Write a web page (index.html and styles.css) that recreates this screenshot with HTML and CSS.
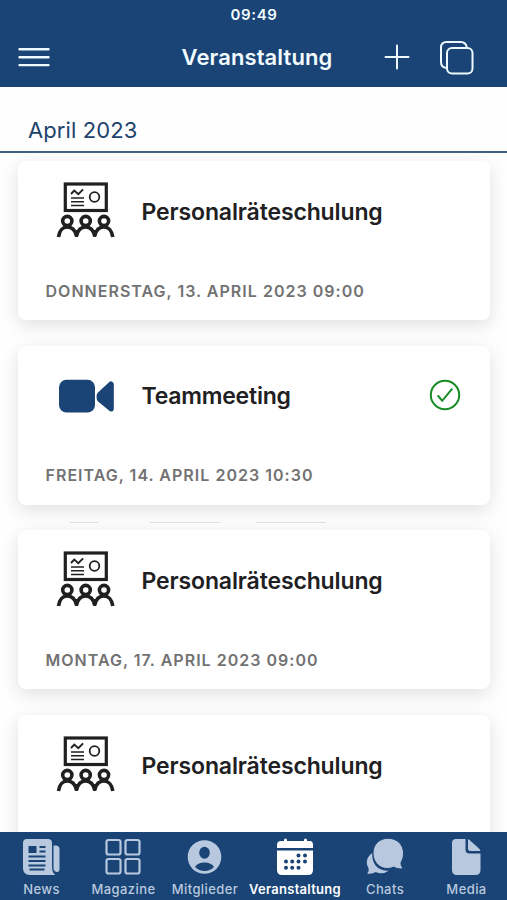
FILE: index.html
```html
<!DOCTYPE html>
<html lang="de">
<head>
<meta charset="utf-8">
<title>Veranstaltung</title>
<link rel="stylesheet" href="styles.css">
</head>
<body>
<svg class="defs" width="0" height="0">
  <symbol id="training" viewBox="0 0 60 58">
    <g fill="none" stroke="#202020">
      <rect x="9.300" y="3" width="41" height="26.500" stroke-width="3.200"/>
      <path d="M15 13l3.300-3.400 4 3.500 4.800-4.800" stroke-width="1.900"/>
      <path d="M15 17h13M15 20.700h13M15 24.400h13" stroke-width="1.500"/>
      <circle cx="38.500" cy="16" r="4.800" stroke-width="1.800"/>
      <g stroke-width="3.600">
        <circle cx="11.300" cy="40" r="4.600"/><circle cx="29.700" cy="40" r="4.600"/><circle cx="48" cy="40" r="4.600"/>
        <path d="M2.500 56c.8-6 4.200-10 8.800-10s8 3.500 9.200 9c1.200-5.500 4.500-9 9.100-9s7.900 3.500 9.100 9c1.200-5.500 4.500-9 9.100-9s8.200 4 9 10"/>
      </g>
      <path d="M20.500 49v7M38.700 49v7" stroke-width="2.800"/>
    </g>
  </symbol>
</svg>
<div class="app">
  <header class="header">
    <div class="status">09:49</div>
    <div class="bar">
      <svg class="menu" width="34" height="24" viewBox="0 0 34 24"><path d="M2.500 4.300h29M2.500 12.200h29M2.500 20.100h29"/></svg>
      <h1>Veranstaltung</h1>
      <div class="actions">
        <svg width="26" height="26" viewBox="0 0 26 26"><path d="M13 1.500v23M1.500 13h23"/></svg>
        <svg width="36" height="36" viewBox="0 0 36 36"><path d="M8.500 29Q3 28.500 3 23V8.500Q3 3 8.500 3H22.500Q28 3 28.800 8.500"/><rect x="9" y="9" width="25.500" height="25.500" rx="5"/></svg>
      </div>
    </div>
  </header>
  <h2 class="month">April 2023</h2>
  <main class="list">
    <article class="card">
      <div class="row"><svg class="icon" viewBox="0 0 60 58"><use href="#training"/></svg><h3>Personalräteschulung</h3></div>
      <p class="date">Donnerstag, 13. April 2023 09:00</p>
    </article>
    <article class="card">
      <div class="row"><svg class="icon" viewBox="0 0 60 58"><rect x="3" y="13.800" width="36" height="32.700" rx="7.500" fill="#194475"/><path d="M42 26.500L53 16.200Q55 14.500 56.500 16Q57.800 16.800 57.800 18V43Q57.600 45.300 56 45.500Q54 45.600 53 44.500L42 35.500Q40.600 34 40.600 32V29.500Q40.600 28 42 26.500Z" fill="#194475"/></svg><h3 class="team">Teammeeting</h3><svg class="check" width="32" height="32" viewBox="0 0 32 32"><circle cx="16" cy="16" r="14.200"/><path d="M9.200 17l4 4.800 9.600-11.600"/></svg></div>
      <p class="date">Freitag, 14. April 2023 10:30</p>
    </article>
    <div class="marks"><i></i><i></i><i></i></div>
    <article class="card">
      <div class="row"><svg class="icon" viewBox="0 0 60 58"><use href="#training"/></svg><h3>Personalräteschulung</h3></div>
      <p class="date d3">Montag, 17. April 2023 09:00</p>
    </article>
    <article class="card">
      <div class="row"><svg class="icon" viewBox="0 0 60 58"><use href="#training"/></svg><h3>Personalräteschulung</h3></div>
    </article>
  </main>
  <nav class="tabs">
    <a class="tab"><svg viewBox="0 0 40 40"><path fill="currentColor" d="M6 2h21q4 0 4 4v25q0 4 3 7H9q-7 0-7-7V6q0-4 4-4Z"/><path fill="currentColor" d="M32.500 8.500h2q4 0 4 4V32q0 3-2.500 3t-3.500-3Z"/><g fill="none" stroke="#194475" stroke-width="2"><path d="M18.500 10h6M18.500 14.500h6M7.500 19.500h17M7.500 24h17M7.500 28.500h17M8.500 32.500h15"/></g><path d="M7.500 9h8v7h-8z" fill="#194475"/></svg><span>News</span></a>
    <a class="tab"><svg viewBox="0 0 40 40"><g fill="none" stroke="currentColor" stroke-width="2.200"><rect x="3.500" y="3" width="14" height="14.500" rx="2"/><rect x="22.500" y="3" width="14" height="14.500" rx="2"/><rect x="3.500" y="22" width="14" height="14.500" rx="2"/><rect x="22.500" y="22" width="14" height="14.500" rx="2"/></g></svg><span>Magazine</span></a>
    <a class="tab"><svg viewBox="0 0 40 40"><circle cx="19.500" cy="20" r="16.800" fill="currentColor"/><ellipse cx="19.500" cy="15.800" rx="5.300" ry="6" fill="#194475"/><path d="M10 30q2.500-4.500 9.500-4.500t9.500 4.500q-4 4-9.500 4t-9.500-4Z" fill="#194475"/></svg><span>Mitglieder</span></a>
    <a class="tab active"><svg viewBox="0 0 40 40"><path fill="currentColor" d="M6 4h3V3q0-1.500 1.500-1.500T12 3v1h17V3q0-1.500 1.500-1.500T32 3v1h3q3 0 3 4v3H2V8q0-4 4-4ZM2 13.500h36V33q0 5-5 5H7q-5 0-5-5Z"/><g fill="#194475"><circle cx="23.500" cy="18.500" r="2"/><circle cx="30" cy="18.500" r="2"/><circle cx="11" cy="24.500" r="2"/><circle cx="17.200" cy="24.500" r="2"/><circle cx="23.500" cy="24.500" r="2"/><circle cx="30" cy="24.500" r="2"/><circle cx="11" cy="30.800" r="2"/><circle cx="17.200" cy="30.800" r="2"/><circle cx="23.500" cy="30.800" r="2"/></g></svg><span>Veranstaltung</span></a>
    <a class="tab"><svg viewBox="0 0 40 40"><path fill="currentColor" d="M7.500 16C2 19 .2 26 3.500 31q1 3-1.300 5.500 5 .8 8.500-1.500 7 3 13.500-1.500C14 35 6 27 7.500 16Z"/><path fill="currentColor" stroke="#194475" stroke-width="1" d="M23 1.300c9.500 0 15.500 6.700 15.500 14.700 0 4-.8 6.500-2.300 9-.7 2.500.2 4.500 2.300 6.500-4 1-7.500 0-9.700-1.500C18 35 8 27 8 16 8 8 14 1.300 23 1.300Z"/></svg><span>Chats</span></a>
    <a class="tab"><svg viewBox="0 0 40 40"><path fill="currentColor" d="M10 2H19.500v10.500q0 4 4 4h11V33q0 5-5 5H11q-5 0-5-5V6q0-4 4-4ZM22 2.500Q22.500 2 23.500 3l10 9q1.500 2 .5 2H24.500q-2.500 0-2.500-2.500Z"/></svg><span>Media</span></a>
  </nav>
</div>
</body>
</html>
```
FILE: styles.css
```css
* { box-sizing: border-box; margin: 0; padding: 0; }
body { font-family: Inter, "Liberation Sans", sans-serif; background: #fefefe; }
.defs { display: block; height: 0; }
.app { width: 507px; height: 900px; display: flex; flex-direction: column; overflow: hidden; }
.header { flex: none; height: 87px; background: #194475; color: #f2fbff; }
.status { height: 29px; text-align: center; font-size: 15px; line-height: 29px; padding-left: 1px; font-weight: 600; letter-spacing: .65px; }
.bar { height: 56px; padding: 0 33px 0 17px; display: grid; grid-template-columns: 95px 1fr 95px; align-items: center; }
.header svg { display: block; fill: none; stroke: #edf9ff; stroke-width: 2; stroke-linecap: round; }
.header .menu { stroke-width: 2.4; }
.bar h1 { font-size: 22px; line-height: 28px; font-weight: 600; letter-spacing: .1px; text-align: center; padding-left: 23px; white-space: nowrap; }
.actions { display: flex; align-items: center; justify-content: flex-end; gap: 28px; }
.month { flex: none; height: 66px; padding: 28px 28px 0; font-size: 22px; line-height: 30px; font-weight: 400; color: #21426c; border-bottom: 2px solid #41617f; letter-spacing: .1px; }
.list { flex: 1; min-height: 0; overflow: hidden; padding: 8px 17.500px 0 18px; display: flex; flex-direction: column; gap: 25.800px; background: #fefefe; position: relative; }
.card { flex: none; height: 158.900px; background: #fff; border-radius: 8px; box-shadow: 0 5px 18px rgba(0,0,0,.12); padding: 20px 28.500px 0 27.500px; }
.row { display: flex; align-items: center; height: 60px; }
.icon { width: 60px; height: 58px; margin: -2px 0 0 10.500px; flex: none; }
.card h3 { margin-left: 25.500px; font-size: 23px; line-height: 30px; padding-top: 1px; font-weight: 600; letter-spacing: -.13px; color: #202022; white-space: nowrap; }
.card .team { letter-spacing: -.22px; }
.check { margin: -1px 0 0 auto; fill: none; stroke: #178c24; stroke-width: 2; stroke-linecap: round; }
.date { margin-top: 39.500px; font-size: 16px; line-height: 20px; font-weight: 600; color: #727272; text-transform: uppercase; letter-spacing: 1.020px; white-space: nowrap; }
.marks { position: absolute; left: 70px; top: 369px; display: flex; }
.marks i { width: 28px; height: 1px; background: #dfe1e1; }
.marks i + i { width: 70px; margin-left: 52px; }
.marks i + i + i { margin-left: 36px; }
.tabs { flex: none; height: 68px; background: #194475; display: grid; grid-template-columns: 82px 82px 81px 99px 81px 82px; color: #b8c9df; }
.tab { display: flex; flex-direction: column; align-items: center; padding-top: 5px; }
.tab svg { width: 40px; height: 40px; flex: none; }
.tab span { font-size: 13px; line-height: 18px; margin-top: 2.500px; padding-left: 1px; font-weight: 500; letter-spacing: .42px; white-space: nowrap; }
.active { color: #fff; }
.tab.active span { font-weight: 600; letter-spacing: .28px; }
```
